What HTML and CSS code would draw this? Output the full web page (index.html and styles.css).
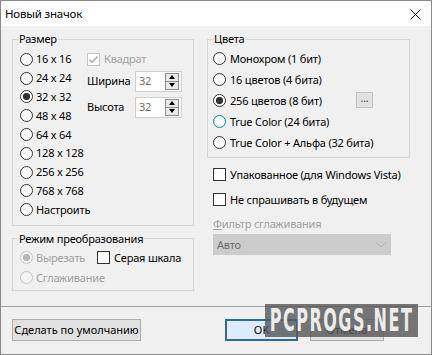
FILE: index.html
```html
<!DOCTYPE html>
<html lang="ru">
<head>
  <meta charset="UTF-8" />
  <title>Новый значок</title>
  <link rel="stylesheet" href="styles.css">
</head>
<body>
  <div class="window">
    <div class="titlebar">
      <span class="title">Новый значок</span>
      <svg class="close" width="11" height="11" viewBox="0 0 11 11">
        <path d="M0.5 0.5 L10.5 10.5 M10.5 0.5 L0.5 10.5" stroke="#111" stroke-width="1" fill="none"/>
      </svg>
    </div>

    <div class="content">
      <div class="left-col">
        <fieldset class="group size-group">
          <legend>Размер</legend>
          <div class="size-body">
            <div class="radio-list">
              <label class="radio"><span class="dot"></span>16 x 16</label>
              <label class="radio"><span class="dot"></span>24 x 24</label>
              <label class="radio checked"><span class="dot"></span>32 x 32</label>
              <label class="radio"><span class="dot"></span>48 x 48</label>
              <label class="radio"><span class="dot"></span>64 x 64</label>
              <label class="radio"><span class="dot"></span>128 x 128</label>
              <label class="radio"><span class="dot"></span>256 x 256</label>
              <label class="radio"><span class="dot"></span>768 x 768</label>
              <label class="radio"><span class="dot"></span>Настроить</label>
            </div>
            <div class="size-opts">
              <label class="check disabled square">
                <span class="box">
                  <svg width="11" height="11" viewBox="0 0 11 11"><path d="M1.5 5.5 L4.2 8.3 L9.5 2.5" stroke="#a9a9a9" stroke-width="1.4" fill="none"/></svg>
                </span>Квадрат
              </label>
              <div class="field-row">
                <span class="field-label">Ширина</span>
                <div class="spin">
                  <span class="spin-value">32</span>
                  <div class="spin-btns"><span class="arrow up"></span><span class="arrow down"></span></div>
                </div>
              </div>
              <div class="field-row">
                <span class="field-label">Высота</span>
                <div class="spin">
                  <span class="spin-value">32</span>
                  <div class="spin-btns"><span class="arrow up"></span><span class="arrow down"></span></div>
                </div>
              </div>
            </div>
          </div>
        </fieldset>

        <fieldset class="group mode-group">
          <legend>Режим преобразования</legend>
          <div class="mode-row">
            <label class="radio disabled checked cut"><span class="dot"></span>Вырезать</label>
            <label class="check"><span class="box"></span>Серая шкала</label>
          </div>
          <label class="radio disabled"><span class="dot"></span>Сглаживание</label>
        </fieldset>
      </div>

      <div class="right-col">
        <fieldset class="group color-group">
          <legend>Цвета</legend>
          <label class="radio"><span class="dot"></span>Монохром (1 бит)</label>
          <label class="radio"><span class="dot"></span>16 цветов (4 бита)</label>
          <div class="radio-with-btn">
            <label class="radio checked"><span class="dot"></span>256 цветов (8 бит)</label>
            <button class="small-btn">...</button>
          </div>
          <label class="radio hover"><span class="dot"></span>True Color (24 бита)</label>
          <label class="radio"><span class="dot"></span>True Color + Альфа (32 бита)</label>
        </fieldset>

        <label class="check opt"><span class="box"></span>Упакованное (для Windows Vista)</label>
        <label class="check opt"><span class="box"></span>Не спрашивать в будущем</label>

        <div class="filter-label"><u>Ф</u>ильтр сглаживания</div>
        <div class="select">
          <span>Авто</span>
          <svg width="10" height="6" viewBox="0 0 10 6"><path d="M0.5 0.5 L5 5 L9.5 0.5" stroke="#b4b4b4" stroke-width="1" fill="none"/></svg>
        </div>
      </div>
    </div>

    <div class="separator"></div>

    <div class="footer">
      <button class="btn default-btn">Сделать по умолчанию</button>
      <button class="btn ok">OK</button>
      <button class="btn cancel">Отмена</button>
    </div>

    <div class="watermark"><span>PCPROGS.NET</span></div>
  </div>
</body>
</html>
```

FILE: styles.css
```css
body {
  margin: 0;
  background: #fff;
  color: #000;
  font-family: "Noto Sans", "Open Sans", sans-serif;
  font-size: 11px;
  letter-spacing: -0.2px;
  line-height: 16px;
}

.window {
  position: relative;
  width: 432px;
  height: 355px;
  box-sizing: border-box;
  border: 1px solid #8a8a8a;
  background: #f0f0f0;
  overflow: hidden;
}

/* Title bar */
.titlebar {
  height: 25px;
  background: #fff;
  display: flex;
  align-items: center;
  justify-content: space-between;
  padding: 0 10px 0 4px;
}

.title {
  font-size: 11.5px;
}

.close {
  margin-top: 1px;
}

/* Main area */
.content {
  display: flex;
  align-items: flex-start;
  gap: 13px;
  padding: 5px 11px 0;
}

.left-col {
  width: 182px;
}

.right-col {
  width: 203px;
  display: flex;
  flex-direction: column;
}

.group {
  margin: 0;
  min-width: 0;
  border: 1px solid #d5d5d5;
}

.group legend {
  padding: 0 1px;
  line-height: 16px;
}

.size-group {
  padding: 3px 0 5.8px 7px;
}

.size-group legend,
.mode-group legend {
  margin-left: -2px;
}

.mode-group {
  margin-top: 5px;
  padding: 1px 0 2px 7px;
}

.color-group {
  padding: 1px 0 4px 5px;
}

/* Radios */
.radio {
  display: flex;
  align-items: center;
  gap: 3px;
  height: 18.8px;
  white-space: nowrap;
}

.color-group .radio {
  height: 21px;
  gap: 4px;
}

.mode-group .radio {
  height: 20px;
}

.dot {
  width: 13px;
  height: 13px;
  box-sizing: border-box;
  border: 1px solid #333;
  border-radius: 50%;
  background: #fff;
  flex: none;
}

.radio.checked .dot {
  background: radial-gradient(circle, #333 0 3.4px, #fff 3.9px);
}

.radio.hover .dot {
  border-color: #0078d7;
}

.radio.disabled {
  color: #a0a0a0;
}

.radio.disabled .dot {
  border-color: #c4c4c4;
  background: #f4f4f4;
}

.radio.disabled.checked .dot {
  background: radial-gradient(circle, #b8b8b8 0 3.4px, #f4f4f4 3.9px);
}

.radio-with-btn {
  display: flex;
  align-items: center;
}

.small-btn {
  margin: -2px 36px 0 auto;
  width: 17px;
  height: 16px;
  padding: 0 0 4px;
  border: 1px solid #c2c2c2;
  background: #e1e1e1;
  font: inherit;
  font-size: 10px;
  line-height: 10px;
  color: #333;
}

/* Checkboxes */
.check {
  display: flex;
  align-items: center;
  gap: 4px;
  white-space: nowrap;
}

.box {
  width: 13px;
  height: 13px;
  box-sizing: border-box;
  border: 1px solid #333;
  background: #fff;
  flex: none;
  display: flex;
  align-items: center;
  justify-content: center;
}

.check.disabled {
  color: #a0a0a0;
}

.check.disabled .box {
  border-color: #c4c4c4;
}

/* Size options */
.size-body {
  display: flex;
}

.radio-list {
  width: 67px;
}

.size-opts {
  display: flex;
  flex-direction: column;
}

.square {
  height: 18.8px;
}

.field-row {
  display: flex;
  align-items: center;
  margin-top: 5px;
}

.square + .field-row {
  margin-top: 2.2px;
}

.field-label {
  width: 48px;
}

.spin {
  width: 47px;
  height: 21px;
  box-sizing: border-box;
  border: 1px solid #cfcfcf;
  background: #fff;
  display: flex;
  align-items: center;
}

.spin-value {
  padding-left: 3px;
  color: #6d6d6d;
}

.spin-btns {
  margin: 0 2px 0 auto;
  width: 14px;
  height: 17px;
  box-sizing: border-box;
  border: 1px solid #8d8d8d;
  background: #e9e9e9;
  display: flex;
  flex-direction: column;
}

.arrow {
  flex: 1;
  display: flex;
  align-items: center;
  justify-content: center;
}

.arrow.up {
  border-bottom: 1px solid #8d8d8d;
}

.arrow::before {
  content: "";
  border-left: 3.5px solid transparent;
  border-right: 3.5px solid transparent;
}

.arrow.up::before {
  border-bottom: 4px solid #000;
}

.arrow.down::before {
  border-top: 4px solid #000;
}

/* Mode group */
.mode-row {
  display: flex;
  align-items: center;
}

.cut {
  width: 77px;
}

/* Right column extras */
.opt {
  height: 20px;
  margin: 5px 0 0 6px;
}

.color-group + .opt {
  margin-top: 6.5px;
}

.filter-label {
  margin: 6.5px 0 0 6px;
  color: #a0a0a0;
}

.select {
  margin: 2px 0 0 6px;
  width: 178px;
  height: 21px;
  box-sizing: border-box;
  background: #cccccc;
  display: flex;
  align-items: center;
  justify-content: space-between;
  padding: 0 5px 0 4px;
  color: #6d6d6d;
}

/* Footer */
.separator {
  margin-top: 15px;
  border-top: 1px solid #a0a0a0;
}

.footer {
  display: flex;
  gap: 12px;
  padding: 12px 47px 0 11px;
}

.btn {
  height: 22px;
  padding: 0;
  border: 1px solid #adadad;
  background: #e1e1e1;
  font: inherit;
  color: #000;
  white-space: nowrap;
}

.default-btn {
  width: 129px;
}

.ok {
  margin-left: auto;
  width: 73px;
  border: 2px solid #2f6c92;
  background: #dcecfb;
}

.cancel {
  width: 74px;
}

/* Watermark over the buttons */
.watermark {
  position: absolute;
  left: 264px;
  top: 303px;
  width: 153px;
  height: 33px;
  background: rgba(88, 88, 88, 0.82);
  display: flex;
  align-items: center;
  justify-content: center;
}

.watermark span {
  display: inline-block;
  font-family: "DejaVu Sans", sans-serif;
  font-weight: bold;
  font-size: 16px;
  line-height: 16px;
  letter-spacing: 1.5px;
  color: #ececec;
  transform: scaleY(1.95);
  white-space: nowrap;
}
```
